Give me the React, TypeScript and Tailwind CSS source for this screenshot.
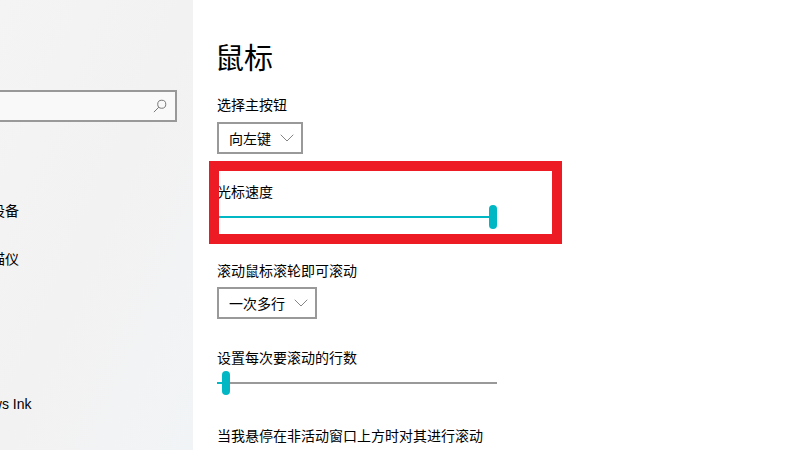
import { ChevronDown } from 'lucide-react';

const font = { fontFamily: '"Noto Sans CJK SC", "Liberation Sans", sans-serif' };

function Dropdown({ label, width }: { label: string; width: string }) {
  return (
    <div className={`flex h-8 items-center justify-between border-2 border-[#999999] bg-white pl-2.5 pr-0.5 ${width}`}>
      <span className="text-sm leading-none text-black">{label}</span>
      <ChevronDown className="h-6 w-6 text-[#666666]" strokeWidth={0.8} />
    </div>
  );
}

function Slider({ value }: { value: number }) {
  return (
    <div className="relative h-6 w-[280px]">
      <div className="absolute left-0 right-0 top-[11px] h-0.5 bg-[#999999]" />
      <div className="absolute left-0 top-[11px] h-0.5 bg-[#00b7c3]" style={{ width: `${value}px` }} />
      <div className="absolute top-0 h-6 w-2 rounded-full bg-[#00b7c3]" style={{ left: `${value}px` }} />
    </div>
  );
}

export default function App() {
  return (
    <div className="relative flex h-[450px] w-[800px] overflow-hidden bg-white" style={font}>
      {/* Sidebar */}
      <div className="h-full w-[193px] shrink-0 bg-gradient-to-br from-[#f4f4f4] via-[#f3f2f2] to-[#f1f4f6] pt-[90px]">
        <div className="-ml-1 flex h-8 w-[181px] items-center justify-end border-2 border-[#999999] bg-[#f9f9f9] pr-2">
          <svg viewBox="0 0 16 16" className="h-[14px] w-[14px] text-[#666666]" fill="none" stroke="currentColor" strokeWidth="1">
            <circle cx="10" cy="6" r="4.6" />
            <path d="M6.6 9.4 1 15" />
          </svg>
        </div>
        <div className="-ml-[79px] mt-[78px] flex w-[272px] flex-col whitespace-nowrap text-sm text-black">
          <div className="h-[48px] leading-5">蓝牙和其他设备</div>
          <div className="h-[145px] leading-5">打印机和扫描仪</div>
          <div className="leading-5">
            笔和 <span className="font-['Liberation_Sans',sans-serif]">Windows Ink</span>
          </div>
        </div>
      </div>

      {/* Settings */}
      <div className="flex-1 pl-6 pt-[36px] text-sm text-black">
        <h1 className="-ml-0.5 text-[29px] leading-10 text-black">鼠标</h1>
        <div className="mt-[18px] leading-5">选择主按钮</div>
        <div className="mt-[8px]"><Dropdown label="向左键" width="w-[86px]" /></div>
        <div className="mt-[27px] leading-5">光标速度</div>
        <div className="mt-[4px]"><Slider value={272} /></div>
        <div className="mt-[31px] leading-5">滚动鼠标滚轮即可滚动</div>
        <div className="mt-[7px]"><Dropdown label="一次多行" width="w-[100px]" /></div>
        <div className="mt-[28px] leading-5">设置每次要滚动的行数</div>
        <div className="mt-[4px]"><Slider value={5} /></div>
        <div className="mt-[30px] leading-5 whitespace-nowrap">当我悬停在非活动窗口上方时对其进行滚动</div>
      </div>

      {/* Red highlight drawn over the screenshot */}
      <div className="absolute left-[209px] top-[161px] h-[83px] w-[353px] border-[10px] border-[#ed1c24]" />
    </div>
  );
}
